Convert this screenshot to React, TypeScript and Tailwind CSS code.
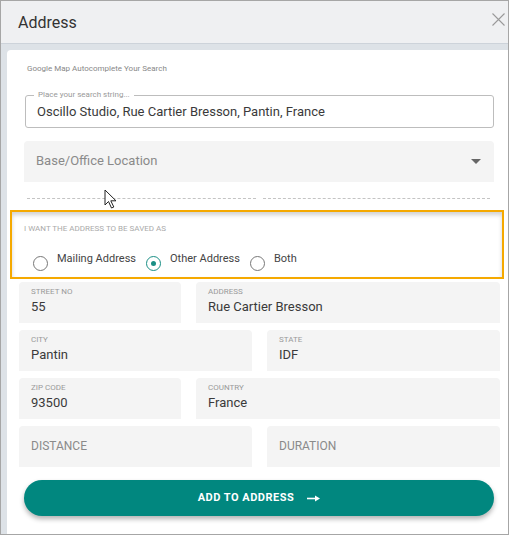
import React from 'react';

const font = { fontFamily: 'Roboto, "Liberation Sans", sans-serif' };

interface FieldProps {
  label: string;
  value?: string;
}

const FilledField: React.FC<FieldProps> = ({ label, value }) => {
  if (!value) {
    return (
      <div className="h-[41px] bg-[#f4f4f4] rounded-t-[4px] px-[12px] flex items-center">
        <span className="text-[12px] text-[#8a8a8a] uppercase -mt-[2px]">{label}</span>
      </div>
    );
  }
  return (
    <div className="h-[41px] bg-[#f4f4f4] rounded-t-[4px] px-[12px] pt-[5px] flex flex-col">
      <span className="text-[8px] leading-[10px] text-[#9a9a9a] uppercase">{label}</span>
      <span className="text-[13px] leading-[16px] mt-[2px] text-[#3a3a3a]">{value}</span>
    </div>
  );
};

const Radio: React.FC<{ label: string; checked?: boolean }> = ({ label, checked }) => (
  <label className="flex items-center">
    <span
      className={
        checked
          ? 'w-[15px] h-[15px] rounded-full border-[1.5px] border-[#1a8f85] flex items-center justify-center'
          : 'w-[15px] h-[15px] rounded-full border-[1.5px] border-[#777]'
      }
    >
      {checked && <span className="w-[5px] h-[5px] rounded-full bg-[#1a8f85]" />}
    </span>
    <span className="ml-[9px] text-[11px] text-[#444] -mt-[8px]">{label}</span>
  </label>
);

export default function App() {
  return (
    <div style={font} className="w-[509px] h-[535px] flex flex-col border border-[#a6a6a6] bg-[#dde2e7]">
      {/* Header */}
      <div className="h-[43px] shrink-0 bg-[#eff0f2] border-b border-[#cdd3da] flex items-center justify-between pl-[17px] pr-[3px]">
        <h1 className="text-[16px] text-[#333] mt-[1px]">Address</h1>
        <svg width="13" height="13" viewBox="0 0 13 13" className="-mt-[5px]">
          <path d="M0.5 0.5 L12.5 12.5 M12.5 0.5 L0.5 12.5" stroke="#9a9a9a" strokeWidth="1.1" fill="none" />
        </svg>
      </div>

      {/* Body */}
      <div className="flex-1 pl-[6px] pt-[6px]">
        <div className="relative h-full bg-white rounded-tl-[4px] flex flex-col pb-[14px]">
          <p className="ml-[20px] mt-[14px] text-[8px] leading-[10px] text-[#888]">
            Google Map Autocomplete Your Search
          </p>

          {/* Outlined search input */}
          <div className="relative ml-[18px] mr-[14px] mt-[21px] h-[33px] border border-[#bdbdbd] rounded-[3px] flex items-center px-[11px]">
            <span className="absolute -top-[6px] left-[8px] px-[4px] bg-white text-[8px] leading-[10px] text-[#999]">
              Place your search string...
            </span>
            <span className="text-[13px] text-[#3a3a3a]">Oscillo Studio, Rue Cartier Bresson, Pantin, France</span>
          </div>

          {/* Select */}
          <div className="ml-[17px] mr-[14px] mt-[13px] h-[41px] bg-[#f4f4f4] rounded-t-[4px] flex items-center justify-between pl-[12px] pr-[13px]">
            <span className="text-[13px] text-[#8a8a8a] -mt-[2px]">Base/Office Location</span>
            <svg width="10" height="5" viewBox="0 0 10 5">
              <path d="M0 0 L10 0 L5 5 Z" fill="#666" />
            </svg>
          </div>

          {/* Dashed lines */}
          <div className="flex ml-[20px] mr-[18px] mt-[16px] gap-[7px]">
            <div className="w-[229px] border-t border-dashed border-[#c4c4c4]" />
            <div className="flex-1 border-t border-dashed border-[#c4c4c4]" />
          </div>

          {/* Saved as box */}
          <div className="ml-[3px] mr-[4px] mt-[11px] h-[69px] border-2 border-[#f5a900] shadow-[inset_0_3px_4px_rgba(0,0,0,0.18)] pl-[12px] pt-[12px]">
            <p className="text-[8px] leading-[10px] text-[#aaa] uppercase">I want the address to be saved as</p>
            <div className="flex items-center gap-[10px] mt-[22px] ml-[9px]">
              <Radio label="Mailing Address" />
              <Radio label="Other Address" checked />
              <Radio label="Both" />
            </div>
          </div>

          {/* Fields */}
          <div className="ml-[12px] mr-[8px] mt-[3px] flex flex-col gap-[7px]">
            <div className="grid grid-cols-[162px_1fr] gap-x-[15px]">
              <FilledField label="Street No" value="55" />
              <FilledField label="Address" value="Rue Cartier Bresson" />
            </div>
            <div className="grid grid-cols-2 gap-x-[15px]">
              <FilledField label="City" value="Pantin" />
              <FilledField label="State" value="IDF" />
            </div>
            <div className="grid grid-cols-[162px_1fr] gap-x-[15px]">
              <FilledField label="Zip Code" value="93500" />
              <FilledField label="Country" value="France" />
            </div>
            <div className="grid grid-cols-2 gap-x-[15px]">
              <FilledField label="Distance" />
              <FilledField label="Duration" />
            </div>
          </div>

          {/* Button */}
          <button className="ml-[17px] mr-[14px] mt-[13px] h-[36px] rounded-full bg-[#01877f] shadow-[0_3px_5px_rgba(0,0,0,0.3)] flex items-center justify-center gap-[13px] text-white">
            <span className="text-[11px] font-bold tracking-[0.5px]">ADD TO ADDRESS</span>
            <svg width="13" height="7" viewBox="0 0 13 7">
              <path d="M0 3.5 H9" stroke="white" strokeWidth="1.6" />
              <path d="M8 0.5 L13 3.5 L8 6.5 Z" fill="white" />
            </svg>
          </button>

          {/* Mouse cursor */}
          <svg
            width="14"
            height="21"
            viewBox="0 0 14 21"
            className="absolute left-[97px] top-[139px]"
          >
            <path
              d="M1 1 L1 16 L4.5 12.5 L7.5 19 L9.8 18 L6.8 11.8 L12 11.8 Z"
              fill="white"
              stroke="#222"
              strokeWidth="1"
              strokeLinejoin="round"
            />
          </svg>
        </div>
      </div>
    </div>
  );
}
